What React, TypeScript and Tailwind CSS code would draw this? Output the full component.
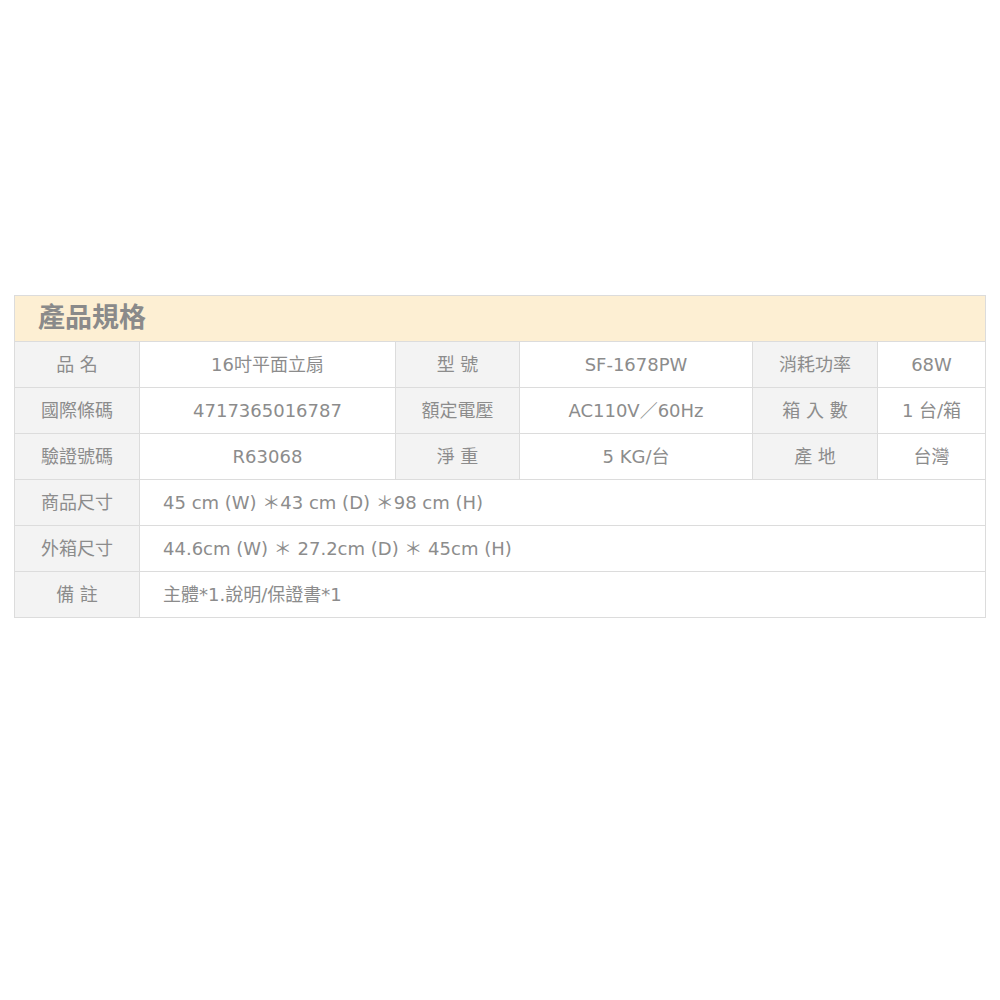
const font = { fontFamily: '"DejaVu Sans", "Noto Sans CJK TC", sans-serif' };

const th = "h-[46px] border border-[#dcdcdc] bg-[#f3f3f3] text-center font-normal";
const td = "h-[46px] border border-[#dcdcdc] bg-white text-center";

const App = () => {
  return (
    <div className="w-[1000px] h-[1000px] bg-white pt-[295px] pl-[14px]" style={font}>
      <table className="table-fixed border-collapse w-[971px] text-[18px] text-[#8c8c8c]">
        <colgroup>
          <col className="w-[125px]" />
          <col className="w-[256px]" />
          <col className="w-[124px]" />
          <col className="w-[233px]" />
          <col className="w-[125px]" />
          <col className="w-[108px]" />
        </colgroup>
        <tbody>
          <tr>
            <td
              colSpan={6}
              className="h-[46px] border border-[#dcdcdc] bg-[#fdefd3] pl-[23px] text-[27px] font-bold text-[#8a8a8a]"
            >
              產品規格
            </td>
          </tr>
          <tr>
            <td className={th}>品 名</td>
            <td className={td}>16吋平面立扇</td>
            <td className={th}>型 號</td>
            <td className={td}>SF-1678PW</td>
            <td className={th}>消耗功率</td>
            <td className={td}>68W</td>
          </tr>
          <tr>
            <td className={th}>國際條碼</td>
            <td className={td}>4717365016787</td>
            <td className={th}>額定電壓</td>
            <td className={td}>AC110V／60Hz</td>
            <td className={th}>箱 入 數</td>
            <td className={td}>1 台/箱</td>
          </tr>
          <tr>
            <td className={th}>驗證號碼</td>
            <td className={td}>R63068</td>
            <td className={th}>淨 重</td>
            <td className={td}>5 KG/台</td>
            <td className={th}>產 地</td>
            <td className={td}>台灣</td>
          </tr>
          <tr>
            <td className={th}>商品尺寸</td>
            <td colSpan={5} className="h-[46px] border border-[#dcdcdc] bg-white pl-[23px]">
              45 cm (W) ＊43 cm (D) ＊98 cm (H)
            </td>
          </tr>
          <tr>
            <td className={th}>外箱尺寸</td>
            <td colSpan={5} className="h-[46px] border border-[#dcdcdc] bg-white pl-[23px]">
              44.6cm (W) ＊ 27.2cm (D) ＊ 45cm (H)
            </td>
          </tr>
          <tr>
            <td className={th}>備 註</td>
            <td colSpan={5} className="h-[46px] border border-[#dcdcdc] bg-white pl-[23px]">
              主體*1.說明/保證書*1
            </td>
          </tr>
        </tbody>
      </table>
    </div>
  );
};

export default App;
